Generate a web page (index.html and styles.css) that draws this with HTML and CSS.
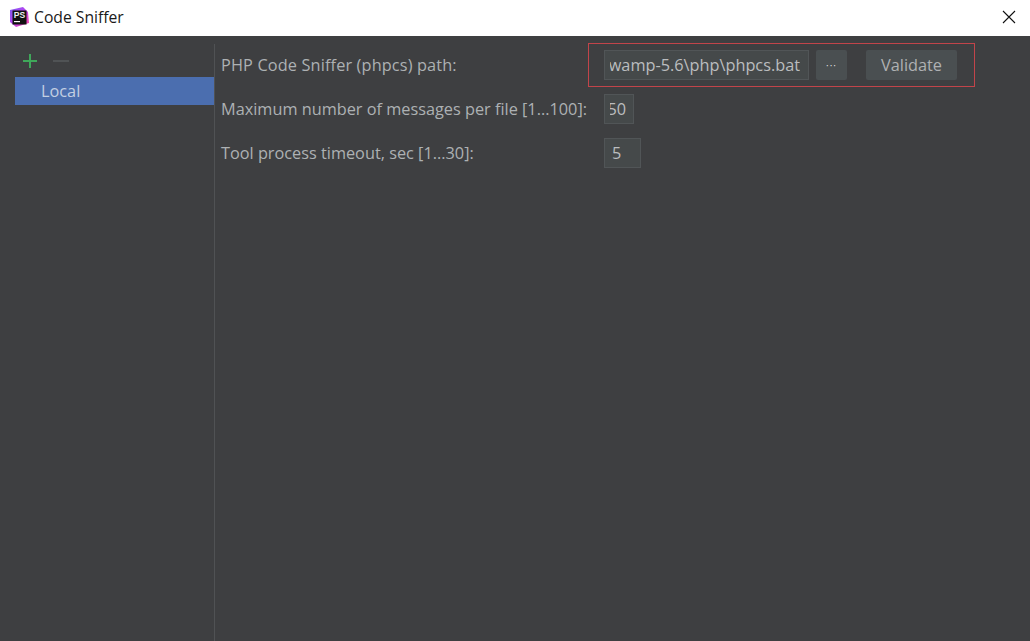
FILE: index.html
```html
<!DOCTYPE html>
<html lang="en">
<head>
    <meta charset="UTF-8">
    <title>Code Sniffer</title>
    <link rel="stylesheet" href="styles.css">
</head>
<body>
    <header class="titlebar">
        <svg class="app-icon" width="20" height="20" viewBox="0 0 20 20">
            <defs>
                <linearGradient id="psGrad" x1="0" y1="0" x2="1" y2="1">
                    <stop offset="0" stop-color="#7b5cf0"/>
                    <stop offset="0.45" stop-color="#b345f1"/>
                    <stop offset="1" stop-color="#ff45a0"/>
                </linearGradient>
            </defs>
            <path d="M1 3 L14 0 L19 5 L20 16 L7 20 L1 15 Z" fill="url(#psGrad)"/>
            <rect x="3.5" y="3.5" width="14" height="14" fill="#111"/>
            <text x="4.8" y="11" class="app-icon-text">PS</text>
            <rect x="5" y="14" width="6" height="1.2" fill="#fff"/>
        </svg>
        <span class="title">Code Sniffer</span>
        <svg class="close" width="14" height="14" viewBox="0 0 14 14">
            <path d="M1 1 L13 13 M13 1 L1 13" stroke="#111" stroke-width="1.1" fill="none"/>
        </svg>
    </header>
    <div class="dialog">
        <aside class="sidebar">
            <div class="toolbar">
                <svg width="16" height="16" viewBox="0 0 16 16">
                    <path d="M8 1 V15 M1 8 H15" stroke="#3fa75a" stroke-width="2" fill="none"/>
                </svg>
                <svg width="16" height="16" viewBox="0 0 16 16">
                    <path d="M0 8 H16" stroke="#505355" stroke-width="2" fill="none"/>
                </svg>
            </div>
            <div class="list-item">Local</div>
        </aside>
        <section class="form">
            <div class="row">
                <label class="label label-path">PHP Code Sniffer (phpcs) path:</label>
                <div class="path-group">
                    <div class="field field-path"><div class="field-clip"><span>C:\wamp-5.6\php\phpcs.bat</span></div></div>
                    <button class="button button-dots">···</button>
                    <button class="button button-validate">Validate</button>
                </div>
            </div>
            <div class="row">
                <label class="label">Maximum number of messages per file [1...100]:</label>
                <div class="field field-messages"><div class="field-clip"><span>50</span></div></div>
            </div>
            <div class="row">
                <label class="label">Tool process timeout, sec [1...30]:</label>
                <div class="field field-timeout">5</div>
            </div>
        </section>
    </div>
</body>
</html>
```

FILE: styles.css
```css
* {
    box-sizing: border-box;
}

html, body {
    height: 100%;
}

body {
    margin: 0;
    display: flex;
    flex-direction: column;
    font-family: "Open Sans", "Noto Sans", sans-serif;
    font-size: 16.3px;
    background: #3e3f41;
    color: #adb1b3;
    overflow: hidden;
}

.titlebar {
    height: 36px;
    flex: none;
    display: flex;
    align-items: center;
    padding: 0 14px 2px 9px;
    background: #fff;
    color: #1a1a1a;
}

.app-icon {
    flex: none;
}

.app-icon-text {
    font-family: "Liberation Sans", sans-serif;
    font-size: 8.5px;
    font-weight: 700;
    fill: #eee;
}

.title {
    margin-left: 5px;
    font-size: 15.7px;
}

.close {
    margin-left: auto;
}

.dialog {
    flex: 1;
    display: flex;
}

.sidebar {
    width: 215px;
    flex: none;
    margin-top: 8px;
    padding-left: 15px;
    border-right: 1px solid #505254;
}

.toolbar {
    height: 33px;
    display: flex;
    align-items: center;
    gap: 15px;
    padding: 1px 0 0 7px;
}

.list-item {
    height: 28px;
    padding-left: 26px;
    line-height: 28px;
    background: #4b6eaf;
    color: #c3cfe2;
}

.form {
    flex: 1;
    display: flex;
    flex-direction: column;
    gap: 14px;
    padding: 14px 0 0 6px;
}

.row {
    display: flex;
    align-items: center;
    height: 30px;
}

.label {
    width: 383px;
    flex: none;
}

.label-path {
    letter-spacing: 0.14px;
}

.path-group {
    position: relative;
    display: flex;
    align-items: center;
}

/* red annotation drawn over the screenshot */
.path-group::after {
    content: "";
    position: absolute;
    top: -7px;
    bottom: -7px;
    left: -16px;
    right: -18px;
    border: 1px solid #c2444a;
}

.field {
    height: 30px;
    line-height: 28px;
    background: #45494a;
    border: 1px solid #515557;
    color: #bbbdbf;
}

.field-clip {
    display: flex;
    justify-content: flex-end;
    overflow: hidden;
    white-space: nowrap;
}

.field-path {
    width: 205px;
    padding: 0 8px 0 5px;
}

.field-messages {
    width: 30px;
    padding: 0 7px 0 5px;
}

.field-timeout {
    width: 37px;
    padding: 0 7px;
}

.button {
    height: 30px;
    padding: 0;
    border: 0;
    border-radius: 2px;
    background: #4a4f51;
    color: #afb1b3;
    font: inherit;
}

.button-dots {
    width: 31px;
    margin-left: 7px;
    font-size: 10px;
    letter-spacing: 1px;
    color: #dcdcdc;
}

.button-validate {
    width: 91px;
    margin-left: 19px;
}
```
